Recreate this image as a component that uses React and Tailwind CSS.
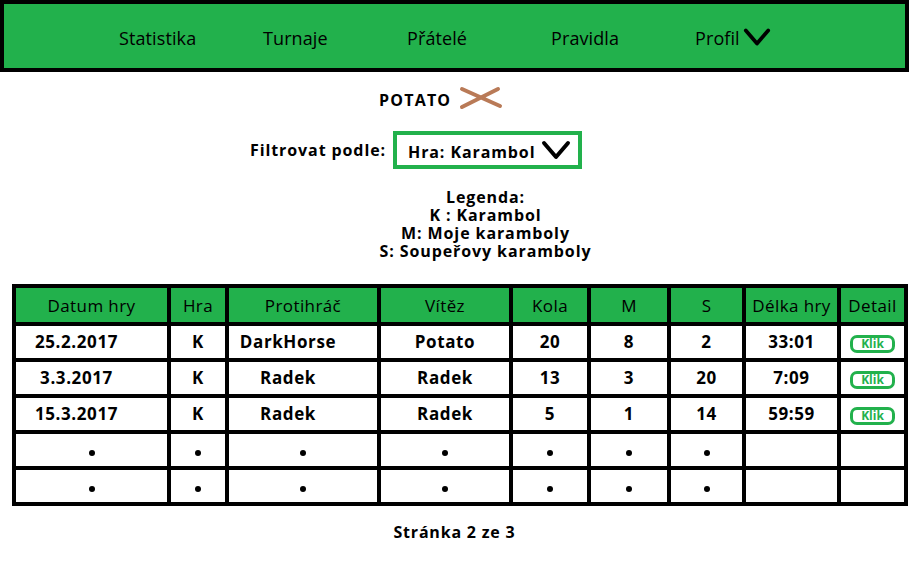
import React from 'react';

const rows = [
  { datum: '25.2.2017', hra: 'K', soupeR: 'DarkHorse', vitez: 'Potato', kola: '20', m: '8', s: '2', delka: '33:01' },
  { datum: '3.3.2017', hra: 'K', soupeR: 'Radek', vitez: 'Radek', kola: '13', m: '3', s: '20', delka: '7:09' },
  { datum: '15.3.2017', hra: 'K', soupeR: 'Radek', vitez: 'Radek', kola: '5', m: '1', s: '14', delka: '59:59' },
];

const headers = [
  { label: 'Datum hry', w: 'w-[155px]' },
  { label: 'Hra', w: 'w-[58px]' },
  { label: 'Protihráč', w: 'w-[152px]' },
  { label: 'Vítěz', w: 'w-[132px]' },
  { label: 'Kola', w: 'w-[78px]' },
  { label: 'M', w: 'w-[80px]' },
  { label: 'S', w: 'w-[75px]' },
  { label: 'Délka hry', w: 'w-[95px]' },
  { label: 'Detail', w: 'w-[67px]' },
];

function Chevron({ className }) {
  return (
    <svg viewBox="0 0 30 20" className={className} fill="none" stroke="black" strokeWidth="4" strokeLinecap="round" strokeLinejoin="round">
      <path d="M3 3 L15 17 L27 3" />
    </svg>
  );
}

function Dot() {
  return <span className="inline-block w-[6px] h-[6px] rounded-full bg-black" />;
}

function Klik() {
  return (
    <span className="inline-flex items-center justify-center w-[45px] h-[18px] rounded-[7px] border-[3px] border-[#22b14c] bg-white text-[12px] font-bold leading-none text-[#22b14c]">
      Klik
    </span>
  );
}

export default function App() {
  const cell = 'border-[4px] border-black text-center align-middle';
  return (
    <div className="w-[909px] h-[573px] bg-white text-black overflow-hidden" style={{ fontFamily: '"Open Sans", Lato, sans-serif' }}>
      {/* Navigace */}
      <nav className="h-[72px] bg-[#22b14c] border-[4px] border-black flex items-center pl-[115px] pt-[4px]">
        {['Statistika', 'Turnaje', 'Přátelé', 'Pravidla'].map((item) => (
          <span key={item} className="w-[144px] text-[18px] tracking-[0.1px]">{item}</span>
        ))}
        <span className="flex items-center text-[18px] tracking-[0.1px]">
          Profil
          <Chevron className="w-[28px] h-[22px] ml-[3px] -mt-[2px]" />
        </span>
      </nav>

      {/* Uživatel */}
      <div className="flex items-center pl-[379px] mt-[14px] h-[28px]">
        <span className="text-[16px] font-bold tracking-[1.2px]">POTATO</span>
        <svg viewBox="0 0 44 24" className="w-[44px] h-[24px] ml-[8px] -mt-[4px]">
          <path d="M3 3 L41 20 M3 21 L39 3" stroke="#b97a57" strokeWidth="4" strokeLinecap="round" />
        </svg>
      </div>

      {/* Filtr */}
      <div className="flex items-center pl-[250px] mt-[17px]">
        <span className="text-[16px] font-bold tracking-[0.9px]">Filtrovat podle:</span>
        <div className="ml-[7px] w-[189px] h-[38px] border-[4px] border-[#22b14c] flex items-center pl-[11px] pr-[6px] justify-between">
          <span className="text-[16px] font-bold pt-[3px] tracking-[0.9px]">Hra: Karambol</span>
          <Chevron className="w-[32px] h-[20px]" />
        </div>
      </div>

      {/* Legenda */}
      <div className="mt-[19px] pl-[62px] text-center text-[16px] font-bold leading-[18px] tracking-[0.9px]">
        <div>Legenda:</div>
        <div>K : Karambol</div>
        <div>M: Moje karamboly</div>
        <div>S: Soupeřovy karamboly</div>
      </div>

      {/* Tabulka */}
      <table className="mt-[24px] ml-[12px] border-collapse table-fixed">
        <thead>
          <tr className="h-[38px] bg-[#22b14c]">
            {headers.map((h) => (
              <th key={h.label} className={`${cell} ${h.w} text-[17px] font-normal tracking-[0.4px] pt-[2px]`}>{h.label}</th>
            ))}
          </tr>
        </thead>
        <tbody className="text-[17px] font-bold tracking-[0.6px]">
          {rows.map((r) => (
            <tr key={r.datum} className="h-[36px]">
              <td className={`${cell} pr-[30px]`}>{r.datum}</td>
              <td className={cell}>{r.hra}</td>
              <td className={`${cell} pr-[30px]`}>{r.soupeR}</td>
              <td className={cell}>{r.vitez}</td>
              <td className={cell}>{r.kola}</td>
              <td className={cell}>{r.m}</td>
              <td className={cell}>{r.s}</td>
              <td className={cell}>{r.delka}</td>
              <td className={`${cell} tracking-normal`}><Klik /></td>
            </tr>
          ))}
          {[0, 1].map((i) => (
            <tr key={i} className="h-[36px]">
              {headers.map((h, j) => (
                <td key={h.label} className={cell}>{j < 7 ? <Dot /> : null}</td>
              ))}
            </tr>
          ))}
        </tbody>
      </table>

      {/* Stránkování */}
      <div className="mt-[14px] text-center text-[16px] font-bold tracking-[0.8px]">Stránka 2 ze 3</div>
    </div>
  );
}
